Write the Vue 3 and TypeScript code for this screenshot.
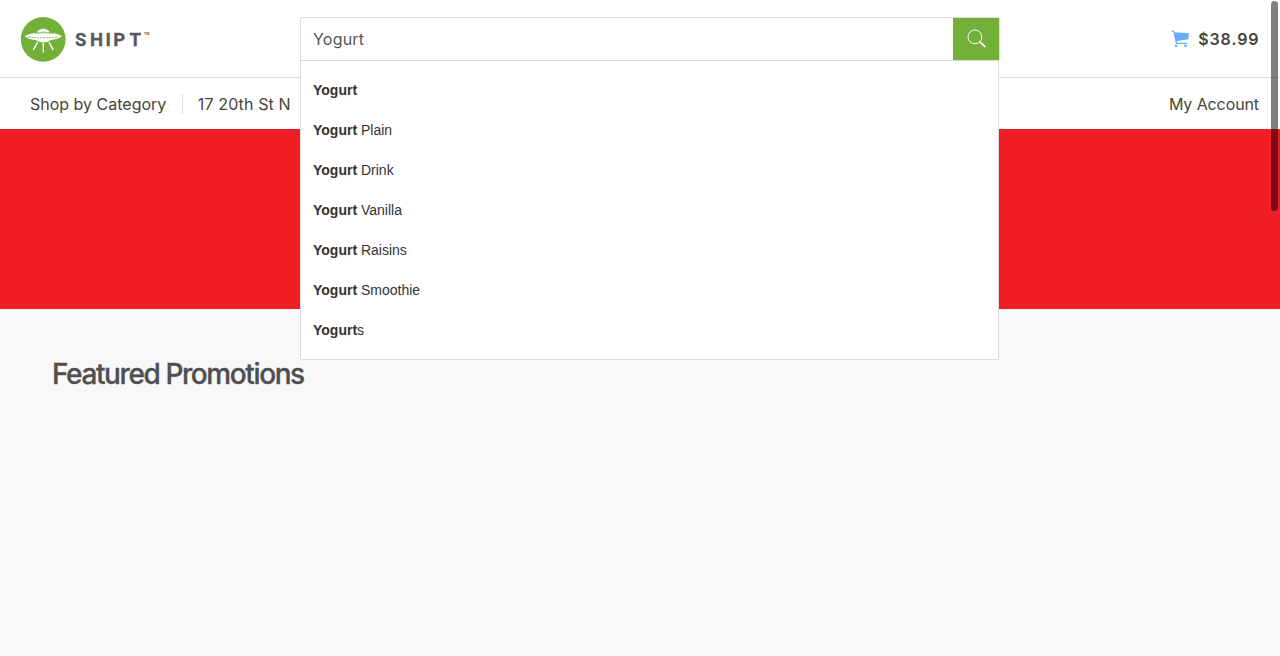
<script setup lang="ts">
import { ref } from 'vue'

const query = ref<string>('Yogurt')
const suffixes: string[] = ['', ' Plain', ' Drink', ' Vanilla', ' Raisins', ' Smoothie', 's']
</script>

<template>
  <div class="page">
    <header class="top">
      <svg class="logo" width="134" height="46" viewBox="0 0 134 46">
        <circle cx="23.2" cy="22.4" r="22.4" fill="#72b038" />
        <g fill="#fff">
          <path d="M16.8 15.3c1.2-2.3 3.5-3.6 6.5-3.6s5.3 1.3 6.5 3.6c-4.2-.8-8.8-.8-13 0z" />
          <path d="M5 19.200c2-2 9.200-3.700 18.300-3.700s16.300 1.700 18.300 3.700c-1 1.700-6 3.400-10.800 3.800-1.500 1.600-4.300 2.300-7.500 2.300s-6-.7-7.500-2.300C11 22.600 6 20.900 5 19.200z" />
          <path d="M17 25l1.200.5-4.200 7.700-1.500-.5zM29.600 25l-1.200.5 4.200 7.700 1.500-.5zM22.500 25.700h1.600l-.2 9.800h-1.200z" />
        </g>
        <path d="M8 20.200q15.300 1.200 30.600 0" fill="none" stroke="#72b038" stroke-width=".8" stroke-dasharray="2 1" />
        <path d="M15 16.400q8.300-1.200 16.600 0" fill="none" stroke="#72b038" stroke-width=".6" />
        <text class="wordmark" y="28.600" x="55 69.900 85.400 93.300 109.500">SHIPT</text>
        <text class="tm" x="124" y="17.500">TM</text>
      </svg>
      <div class="cart">
        <svg width="19" height="18" viewBox="0 0 19 18">
          <path d="M.5.800 2.800 1.500 5.500 13.300H16" fill="none" stroke="#66aeff" stroke-width="1.200" />
          <path d="M3.200 2.200 18 3.300 17.300 9.300 4.900 11.200z" fill="#66aeff" />
          <rect x="3.500" y="14.700" width="3" height="2.200" rx=".8" fill="#66aeff" />
          <rect x="13" y="14.700" width="3" height="2.200" rx=".8" fill="#66aeff" />
        </svg>
        <span class="price">$38.99</span>
      </div>
    </header>
    <nav class="nav">
      <span class="category">Shop by Category</span>
      <span class="address">17 20th St N</span>
      <span class="account">My Account</span>
    </nav>
    <div class="banner"></div>
    <main class="content">
      <h2>Featured Promotions</h2>
    </main>
    <div class="search">
      <div class="bar">
        <span class="query">{{ query }}</span>
        <span class="button">
          <svg width="20" height="20" viewBox="0 0 20 20">
            <circle cx="7.900" cy="7.900" r="6.900" fill="none" stroke="#fff" stroke-width="1" />
            <path d="M12.800 12.800 18.400 18" stroke="#fff" stroke-width="1.800" fill="none" />
          </svg>
        </span>
      </div>
      <ul class="menu">
        <li v-for="suffix in suffixes" :key="suffix"><b>{{ query }}</b>{{ suffix }}</li>
      </ul>
    </div>
    <div class="scroll"></div>
  </div>
</template>

<style>
body { margin: 0; overflow: hidden; }
</style>

<style scoped>
.page {
  position: relative;
  height: 656px;
  overflow: hidden;
  background: #f8f8f8;
  font-family: Inter, "Liberation Sans", sans-serif;
  color: #464537;
}
.top {
  box-sizing: border-box;
  height: 78px;
  display: flex;
  align-items: center;
  justify-content: space-between;
  padding: 0 21px 0 20px;
  background: #fff;
  border-bottom: 1px solid #dadddd;
}
.logo { display: block; margin-top: 3px; }
.wordmark { font: 700 18.500px Roboto, sans-serif; fill: #58595b; stroke: #58595b; stroke-width: .3px; }
.tm { font: 700 3.500px Roboto, sans-serif; fill: #58595b; }
.cart { display: flex; align-items: center; gap: 8.500px; }
.cart svg { margin-top: 1px; }
.price { font-size: 16px; font-weight: 600; letter-spacing: .9px; margin-top: 1px; margin-right: -.5px; }
.nav {
  height: 51px;
  display: flex;
  align-items: center;
  padding: 0 21px 0 30px;
  background: #fff;
  font-size: 16px;
}
.nav span { line-height: 20px; white-space: nowrap; margin-top: 1px; }
.category { padding-right: 16px; border-right: 1px solid #dadddd; }
.address { padding-left: 14.500px; letter-spacing: .12px; }
.account { margin-left: auto; letter-spacing: -.1px; }
.banner { height: 180px; background: #ef1e25; }
.content { padding: 47px 52px; }
h2 { margin: 0; font-size: 28px; line-height: 36px; font-weight: 500; letter-spacing: -1.400px; color: #4f4f4f; -webkit-text-stroke: .3px #4f4f4f; }
.search {
  position: absolute;
  top: 17px;
  left: 300px;
  width: 700px;
}
.bar {
  box-sizing: border-box;
  height: 44px;
  display: flex;
  justify-content: space-between;
  border: 1px solid #dadddd;
  border-radius: 2px 2px 0 0;
  background: #fff;
}
.query { padding-left: 12px; font-size: 16px; line-height: 43px; color: #555; letter-spacing: .2px; }
.button {
  box-sizing: border-box;
  width: 46px;
  padding: 0 0 0 2px;
  display: flex;
  align-items: center;
  justify-content: center;
  background: #72b038;
}
.menu {
  box-sizing: border-box;
  width: 699px;
  height: 299px;
  margin: 0;
  padding: 9px 12px;
  list-style: none;
  background: #fff;
  border: 1px solid #dadddd;
  border-top: 0;
  border-radius: 0 0 2px 2px;
  font: 14px/40px "Liberation Sans", Arial, sans-serif;
  color: #333;
}
.menu li { height: 40px; white-space: pre; }
.scroll {
  position: absolute;
  top: 1px;
  right: 2px;
  width: 7px;
  height: 210px;
  border-radius: 4px;
  background: rgba(0, 0, 0, .5);
}
</style>
